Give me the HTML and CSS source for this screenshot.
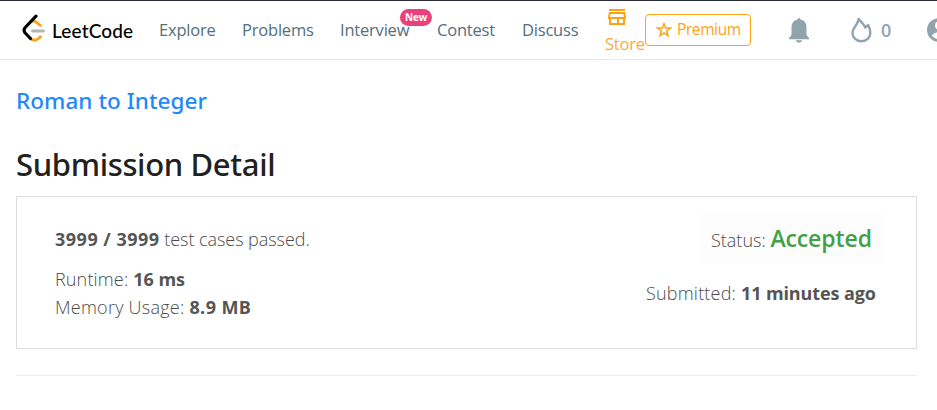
FILE: index.html
```html
<!DOCTYPE html>
<html lang="en">
<head>
<meta charset="utf-8">
<title>Submission Detail - LeetCode</title>
<link rel="stylesheet" href="styles.css">
</head>
<body>
<header class="navbar">
  <a class="brand">
    <svg class="brand-mark" width="24" height="28" viewBox="0 0 24 28" fill="none" stroke-linecap="round" stroke-linejoin="round">
      <path d="M10.5 7.2 13 7.400 18.500 11.500" stroke="#ffa116" stroke-width="2.8"/>
      <path d="M8 24.2Q12.5 28 16.500 24.500L18.400 22.800" stroke="#ffa116" stroke-width="2.900"/>
      <path d="M10.500 17H21.500" stroke="#b3b3b3" stroke-width="2.800"/>
      <path d="M14 2.200 3.200 13.500Q1 16 3.200 19L8.500 24.500" stroke="#000" stroke-width="3.200"/>
    </svg>
    <span class="brand-name">LeetCode</span>
  </a>
  <nav class="links">
    <a class="link explore">Explore</a>
    <a class="link problems">Problems</a>
    <a class="link interview">Interview<span class="badge">New</span></a>
    <a class="link contest">Contest</a>
    <a class="link discuss">Discuss</a>
    <a class="store">
      <svg width="18" height="17" viewBox="0 0 18 17" fill="#ffa116" fill-rule="evenodd"><path d="M1 0H17V2H1ZM1 3H17L18 8V10H17V16H1V10H0V8ZM2.700 5 2 8H16L15.300 5ZM3 10V14H9V10ZM11 10V14H15V10Z"/></svg>
      <span class="store-label">Store</span>
    </a>
  </nav>
  <a class="premium">
    <svg width="16" height="16" viewBox="0 0 16 16" fill="none" stroke="#ffa116" stroke-width="1.500"><path d="M8 1.700 9.700 6H14.500L10.700 9 12 13.700 8 11 4 13.700 5.300 9 1.500 6H6.300Z"/></svg>
    <span class="premium-label">Premium</span>
  </a>
  <svg class="bell" width="20" height="25" viewBox="0 0 20 25" fill="#90a4ae"><path d="M8.500 1.600a1.500 1.500 0 0 1 3 0C15.500 2.500 17.500 5.500 17.500 9.500V17L20 20V21.200H0V20L2.500 17V9.500C2.500 5.500 4.500 2.500 8.500 1.600ZM6.500 22.300H13.500Q12.500 24.700 10 24.700T6.500 22.300Z"/></svg>
  <div class="streak">
    <svg width="21" height="26" viewBox="0 0 21 26" fill="none" stroke="#90a4ae" stroke-width="2.400" stroke-linejoin="round"><path d="M7.700 1.900C7.500 7 1.500 10.500 1.500 16A8.900 8.300 0 0 0 19.300 16C19.300 12.500 18.500 10.500 17.200 8L14.200 10.500C13 7 10 5 7.700 1.900Z"/></svg>
    <span class="count">0</span>
  </div>
  <svg class="avatar" width="24" height="24" viewBox="0 0 24 24"><circle cx="12" cy="12" r="12" fill="#90a4ae"/><circle cx="12" cy="7.500" r="4" fill="#fff"/><path d="M4.500 17.500Q12 10.500 19.500 17.500 12 25 4.500 17.500Z" fill="#fff"/></svg>
</header>
<main class="page">
  <h4 class="problem"><a class="problem-link">Roman to Integer</a></h4>
  <h3 class="title">Submission Detail</h3>
  <section class="panel">
    <div class="stats">
      <p class="cases"><strong>3999 / 3999</strong> test cases passed.</p>
      <p class="runtime">Runtime: <strong>16 ms</strong></p>
      <p class="memory">Memory Usage: <strong>8.9 MB</strong></p>
    </div>
    <div class="result">
      <p class="status">Status: <strong class="accepted">Accepted</strong></p>
      <p class="submitted">Submitted: <strong>11 minutes ago</strong></p>
    </div>
  </section>
  <hr class="rule">
</main>
</body>
</html>
```
FILE: styles.css
```css
* { box-sizing: border-box; }
html { overflow: hidden; }
body { margin: 0; background: #fff; color: #4c4c4c; font-family: "Open Sans", sans-serif; font-size: 18px; overflow: hidden; white-space: nowrap; }
p, h3, h4 { margin: 0; }
.navbar { display: flex; align-items: flex-start; width: 951px; height: 60px; border-top: 1px solid #2b2b3a; border-bottom: 1px solid #e7e7e7; color: #546e7a; }
.brand { display: flex; width: 137px; margin-left: 22px; padding-top: 13px; color: #000; }
.brand-mark { flex: none; }
.brand-name { margin-left: 6px; padding-top: 1px; font: 500 19px/32px Lato, sans-serif; letter-spacing: .15px; }
.links { display: flex; width: 486px; }
.link { position: relative; flex: none; line-height: 28px; padding-top: 15px; font-size: 16.5px; letter-spacing: -.2px; }
.explore { width: 83px; }
.problems { width: 98px; }
.interview { width: 97px; }
.contest { width: 85px; }
.discuss { width: 83px; }
.badge { position: absolute; left: 60px; top: 8px; width: 32px; height: 17px; border-radius: 9px; background: #ec407a; color: #fff; font-size: 10px; font-weight: 700; line-height: 17px; text-align: center; letter-spacing: -.2px; }
.store { display: flex; flex-direction: column; width: 40px; padding-top: 8px; color: #ffa940; }
.store svg { margin-left: 3px; }
.store-label { font-size: 16.5px; line-height: 24px; margin-top: 6px; letter-spacing: -.2px; }
.premium { display: flex; width: 106px; height: 32px; margin-top: 13px; padding: 7px 0 0 10px; border: 1px solid #ffa116; border-radius: 4px; color: #ffa116; }
.premium-label { margin-left: 5px; font-size: 15.5px; line-height: 15px; letter-spacing: -.4px; }
.bell { margin: 17px 0 0 38px; }
.streak { display: flex; margin: 16px 0 0 42px; width: 76px; color: #90a4ae; }
.count { margin-left: 9px; font-size: 18px; font-weight: 600; line-height: 27px; }
.avatar { flex: none; margin-top: 17px; }
.page { padding: 0 20px 0 16px; }
.problem { margin-top: 24px; color: #1e88ff; font-family: "Noto Sans", sans-serif; font-size: 22.500px; font-weight: 500; line-height: 34px; letter-spacing: .05px; }
.title { margin-top: 25px; color: #212121; font-family: "Noto Sans", sans-serif; font-size: 31px; font-weight: 500; line-height: 42px; letter-spacing: -.35px; }
.panel { display: flex; justify-content: space-between; height: 153px; margin-top: 11px; padding: 16px 34px 0 38px; border: 1px solid #ddd; font-weight: 300; }
.panel strong { color: #555; font-weight: 700; letter-spacing: 0; }
.stats { padding-top: 12px; line-height: 28px; }
.cases { margin-bottom: 12px; letter-spacing: -.05px; }
.panel .cases strong { letter-spacing: .5px; }
.runtime { letter-spacing: .15px; }
.memory { letter-spacing: .25px; }
.panel .memory strong { letter-spacing: .4px; }
.result { display: flex; flex-direction: column; align-items: flex-end; }
.status { width: 182px; height: 51px; padding-left: 11px; background: #fdfdfd; line-height: 51px; }
.panel .accepted { color: #43a047; font-size: 23px; font-weight: 600; letter-spacing: -.1px; }
.submitted { width: 236px; margin-top: 15px; line-height: 28px; letter-spacing: .2px; }
.panel .submitted strong { letter-spacing: -.1px; }
.rule { height: 1px; margin: 26px 0 0; border: 0; background: #eee; }
```
